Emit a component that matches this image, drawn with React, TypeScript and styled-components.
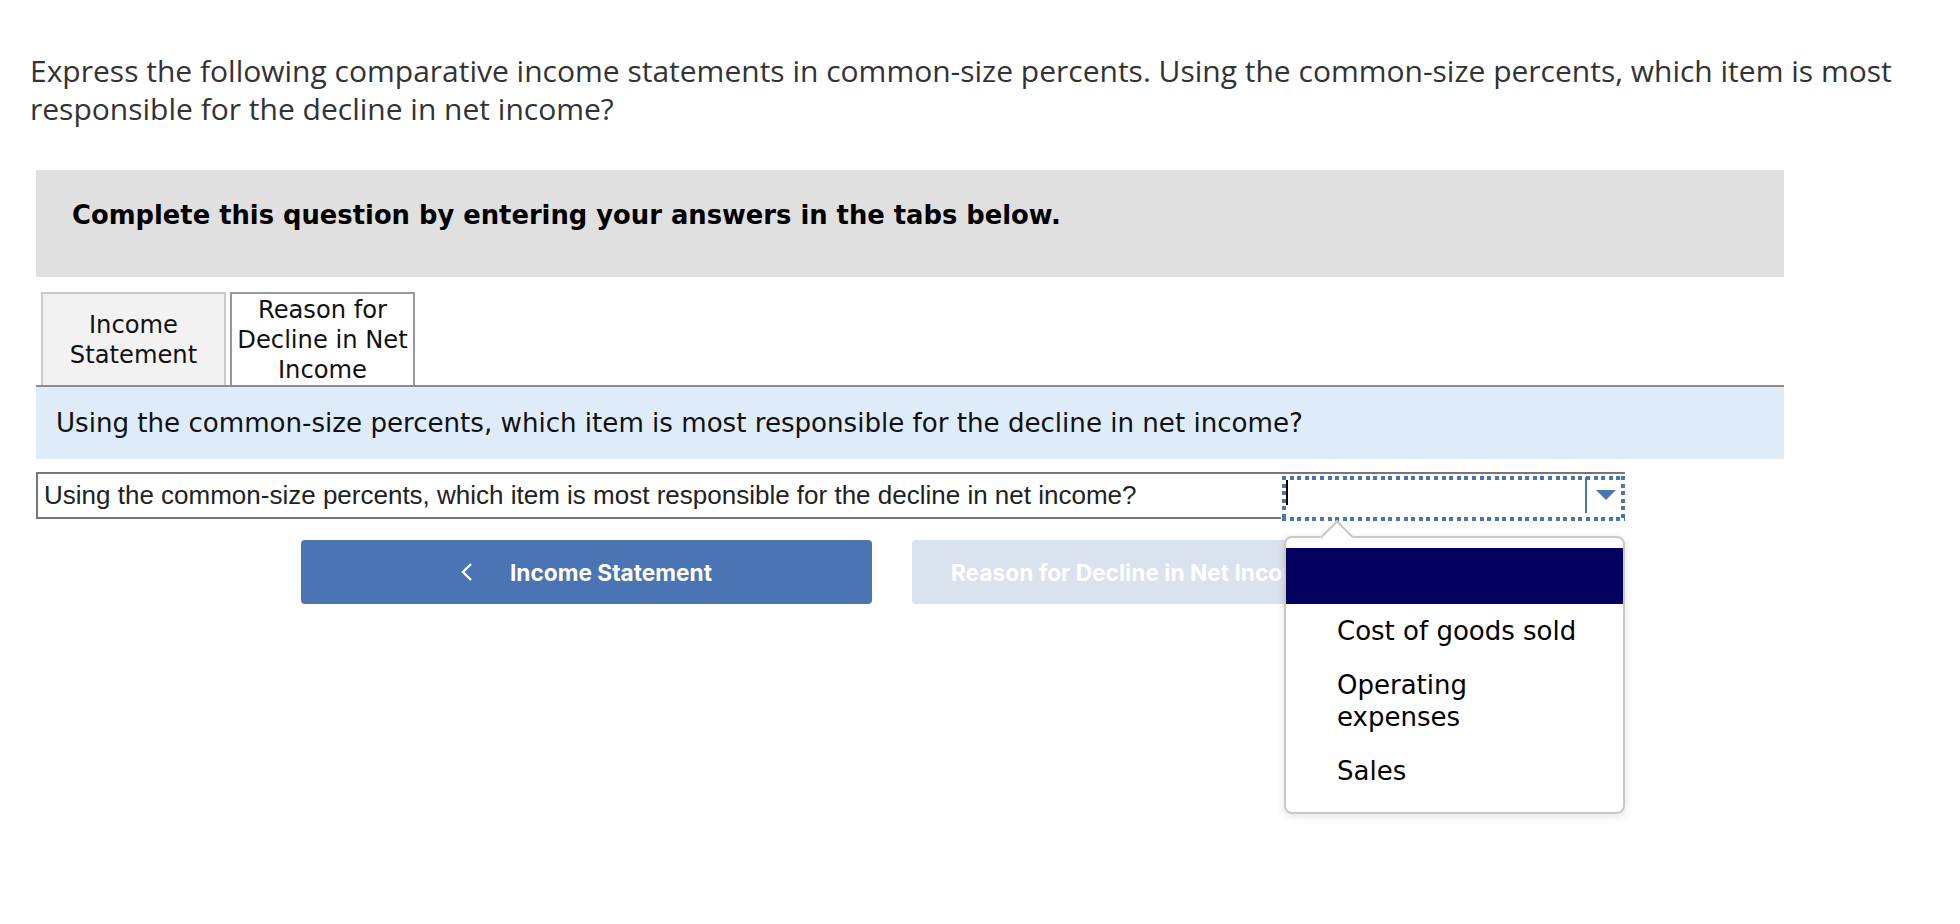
import styled, { createGlobalStyle } from 'styled-components';

const GlobalStyle = createGlobalStyle`
  body {
    margin: 0;
    background: #fff;
  }
`;

const options = ['Cost of goods sold', 'Operating expenses', 'Sales'];

const App = () => {
  return (
    <Page>
      <GlobalStyle />
      <Prompt>
        Express the following comparative income statements in common-size percents. Using the common-size percents, which item is most
        <br />
        responsible for the decline in net income?
      </Prompt>

      <Panel>
        <Banner>Complete this question by entering your answers in the tabs below.</Banner>

        <TabRow>
          <Tab>Income<br />Statement</Tab>
          <Tab $active>Reason for<br />Decline in Net<br />Income</Tab>
        </TabRow>

        <QuestionBar>
          Using the common-size percents, which item is most responsible for the decline in net income?
        </QuestionBar>

        <AnswerRow>
          <AnswerLabel>
            Using the common-size percents, which item is most responsible for the decline in net income?
          </AnswerLabel>
          <SelectCell>
            <FocusRing>
              <Caret />
              <Divider />
              <ArrowBox>
                <svg width="20" height="10" viewBox="0 0 20 10">
                  <polygon points="0,0 20,0 10,10" fill="#4a74b4" />
                </svg>
              </ArrowBox>
            </FocusRing>
            <Popup>
              <Highlight />
              {options.map((o) => (
                <Option key={o}>{o}</Option>
              ))}
            </Popup>
          </SelectCell>
        </AnswerRow>

        <ButtonRow>
          <NavButton>
            <Chevron>
              <svg width="12" height="18" viewBox="0 0 12 18">
                <polyline points="10,1 2,9 10,17" fill="none" stroke="#fff" strokeWidth="2.4" />
              </svg>
            </Chevron>
            Income Statement
          </NavButton>
          <NavButton $disabled>
            Reason for Decline in Net Income
            <Chevron>
              <svg width="12" height="18" viewBox="0 0 12 18">
                <polyline points="2,1 10,9 2,17" fill="none" stroke="#fff" strokeWidth="2.4" />
              </svg>
            </Chevron>
          </NavButton>
        </ButtonRow>
      </Panel>
    </Page>
  );
};

const Page = styled.div`
  width: 1960px;
  min-height: 924px;
  padding-top: 52px;
  box-sizing: border-box;
`;

const Prompt = styled.p`
  margin: 0 0 43px 30px;
  font-family: 'Open Sans', 'Liberation Sans', sans-serif;
  font-size: 30px;
  line-height: 37.5px;
  color: #333;
  white-space: nowrap;
`;

const Panel = styled.div`
  margin-left: 36px;
  width: 1748px;
`;

const Banner = styled.div`
  height: 107px;
  box-sizing: border-box;
  padding: 30px 36px 0;
  background: #e0e0e0;
  font-family: 'DejaVu Sans', Verdana, sans-serif;
  font-weight: 700;
  font-size: 25.8px;
  line-height: 30px;
  color: #000;
`;

const TabRow = styled.div`
  display: flex;
  gap: 4px;
  margin-top: 15px;
  padding-left: 5px;
  height: 93px;
  border-bottom: 2px solid #8c8c8c;
`;

const Tab = styled.div<{ $active?: boolean }>`
  width: 185px;
  box-sizing: border-box;
  display: flex;
  align-items: center;
  justify-content: center;
  text-align: center;
  background: ${(p) => (p.$active ? '#fff' : '#f2f2f2')};
  border: 2px solid ${(p) => (p.$active ? '#999' : '#c9c9c9')};
  border-bottom: none;
  font-family: 'DejaVu Sans', Verdana, sans-serif;
  font-size: 24.2px;
  line-height: 30px;
  color: #111;
  white-space: nowrap;
`;

const QuestionBar = styled.div`
  height: 72px;
  display: flex;
  align-items: center;
  padding-left: 20px;
  background: #deebf8;
  font-family: 'DejaVu Sans', Verdana, sans-serif;
  font-size: 26.1px;
  color: #111;
`;

const AnswerRow = styled.div`
  display: flex;
  margin-top: 13px;
  height: 47px;
`;

const AnswerLabel = styled.div`
  width: 1245px;
  box-sizing: border-box;
  display: flex;
  align-items: center;
  padding-left: 6px;
  border: 2px solid #777;
  border-right: none;
  font-family: 'Liberation Sans', Arial, sans-serif;
  font-size: 26px;
  color: #222;
  white-space: nowrap;
`;

const SelectCell = styled.div`
  position: relative;
  width: 344px;
  box-sizing: border-box;
  border-top: 2px solid #777;
`;

const FocusRing = styled.div`
  position: relative;
  height: 45px;
  margin: 2px 0 0 1px;
  width: 343px;
  box-sizing: border-box;
  background:
    repeating-linear-gradient(90deg, #4a74b4 0 4px, transparent 4px 7.6px) top left / 100% 4px no-repeat,
    repeating-linear-gradient(90deg, #4a74b4 0 4px, transparent 4px 7.6px) bottom left / 100% 4px no-repeat,
    repeating-linear-gradient(180deg, #4a74b4 0 4px, transparent 4px 7.6px) top left / 4px 100% no-repeat,
    repeating-linear-gradient(180deg, #4a74b4 0 4px, transparent 4px 7.6px) top right / 4px 100% no-repeat;
  display: flex;
  align-items: center;
`;

const Caret = styled.span`
  position: absolute;
  left: 4px;
  top: 4px;
  width: 2px;
  height: 25px;
  background: #000;
`;

const Divider = styled.span`
  margin-left: auto;
  width: 2px;
  height: 36px;
  align-self: flex-start;
  margin-top: 1px;
  background: #4a74b4;
`;

const ArrowBox = styled.span`
  width: 38px;
  display: flex;
  justify-content: center;
  align-items: center;
  margin-top: -8px;
`;

const Popup = styled.div`
  position: absolute;
  top: 62px;
  left: 3px;
  width: 341px;
  box-sizing: border-box;
  padding: 10px 0 14px;
  background: #fff;
  border: 2px solid #c8c8c8;
  border-radius: 8px;
  box-shadow: 0 2px 10px rgba(0, 0, 0, 0.12);
  z-index: 2;

  &::before {
    content: '';
    position: absolute;
    left: 39px;
    top: -13px;
    width: 22px;
    height: 22px;
    background: #fff;
    border-top: 2px solid #c8c8c8;
    border-left: 2px solid #c8c8c8;
    transform: rotate(45deg);
  }
`;

const Highlight = styled.div`
  position: relative;
  height: 56px;
  background: #040060;
`;

const Option = styled.div`
  padding: 11px 40px 11px 51px;
  font-family: 'DejaVu Sans', Verdana, sans-serif;
  font-size: 26px;
  line-height: 32px;
  color: #000;
`;

const ButtonRow = styled.div`
  display: flex;
  gap: 40px;
  margin-top: 21px;
  padding-left: 265px;
`;

const NavButton = styled.div<{ $disabled?: boolean }>`
  width: 571px;
  height: 64px;
  box-sizing: border-box;
  display: flex;
  align-items: center;
  justify-content: ${(p) => (p.$disabled ? 'flex-start' : 'center')};
  padding-left: ${(p) => (p.$disabled ? '39px' : '0')};
  gap: 37px;
  border-radius: 4px;
  background: ${(p) => (p.$disabled ? '#d9e2ee' : '#4a74b4')};
  font-family: Inter, Roboto, 'Liberation Sans', sans-serif;
  font-weight: 700;
  font-size: 22.7px;
  color: #fff;
  white-space: nowrap;
  overflow: hidden;
`;

const Chevron = styled.span`
  display: flex;
  align-items: center;
`;

export default App;
